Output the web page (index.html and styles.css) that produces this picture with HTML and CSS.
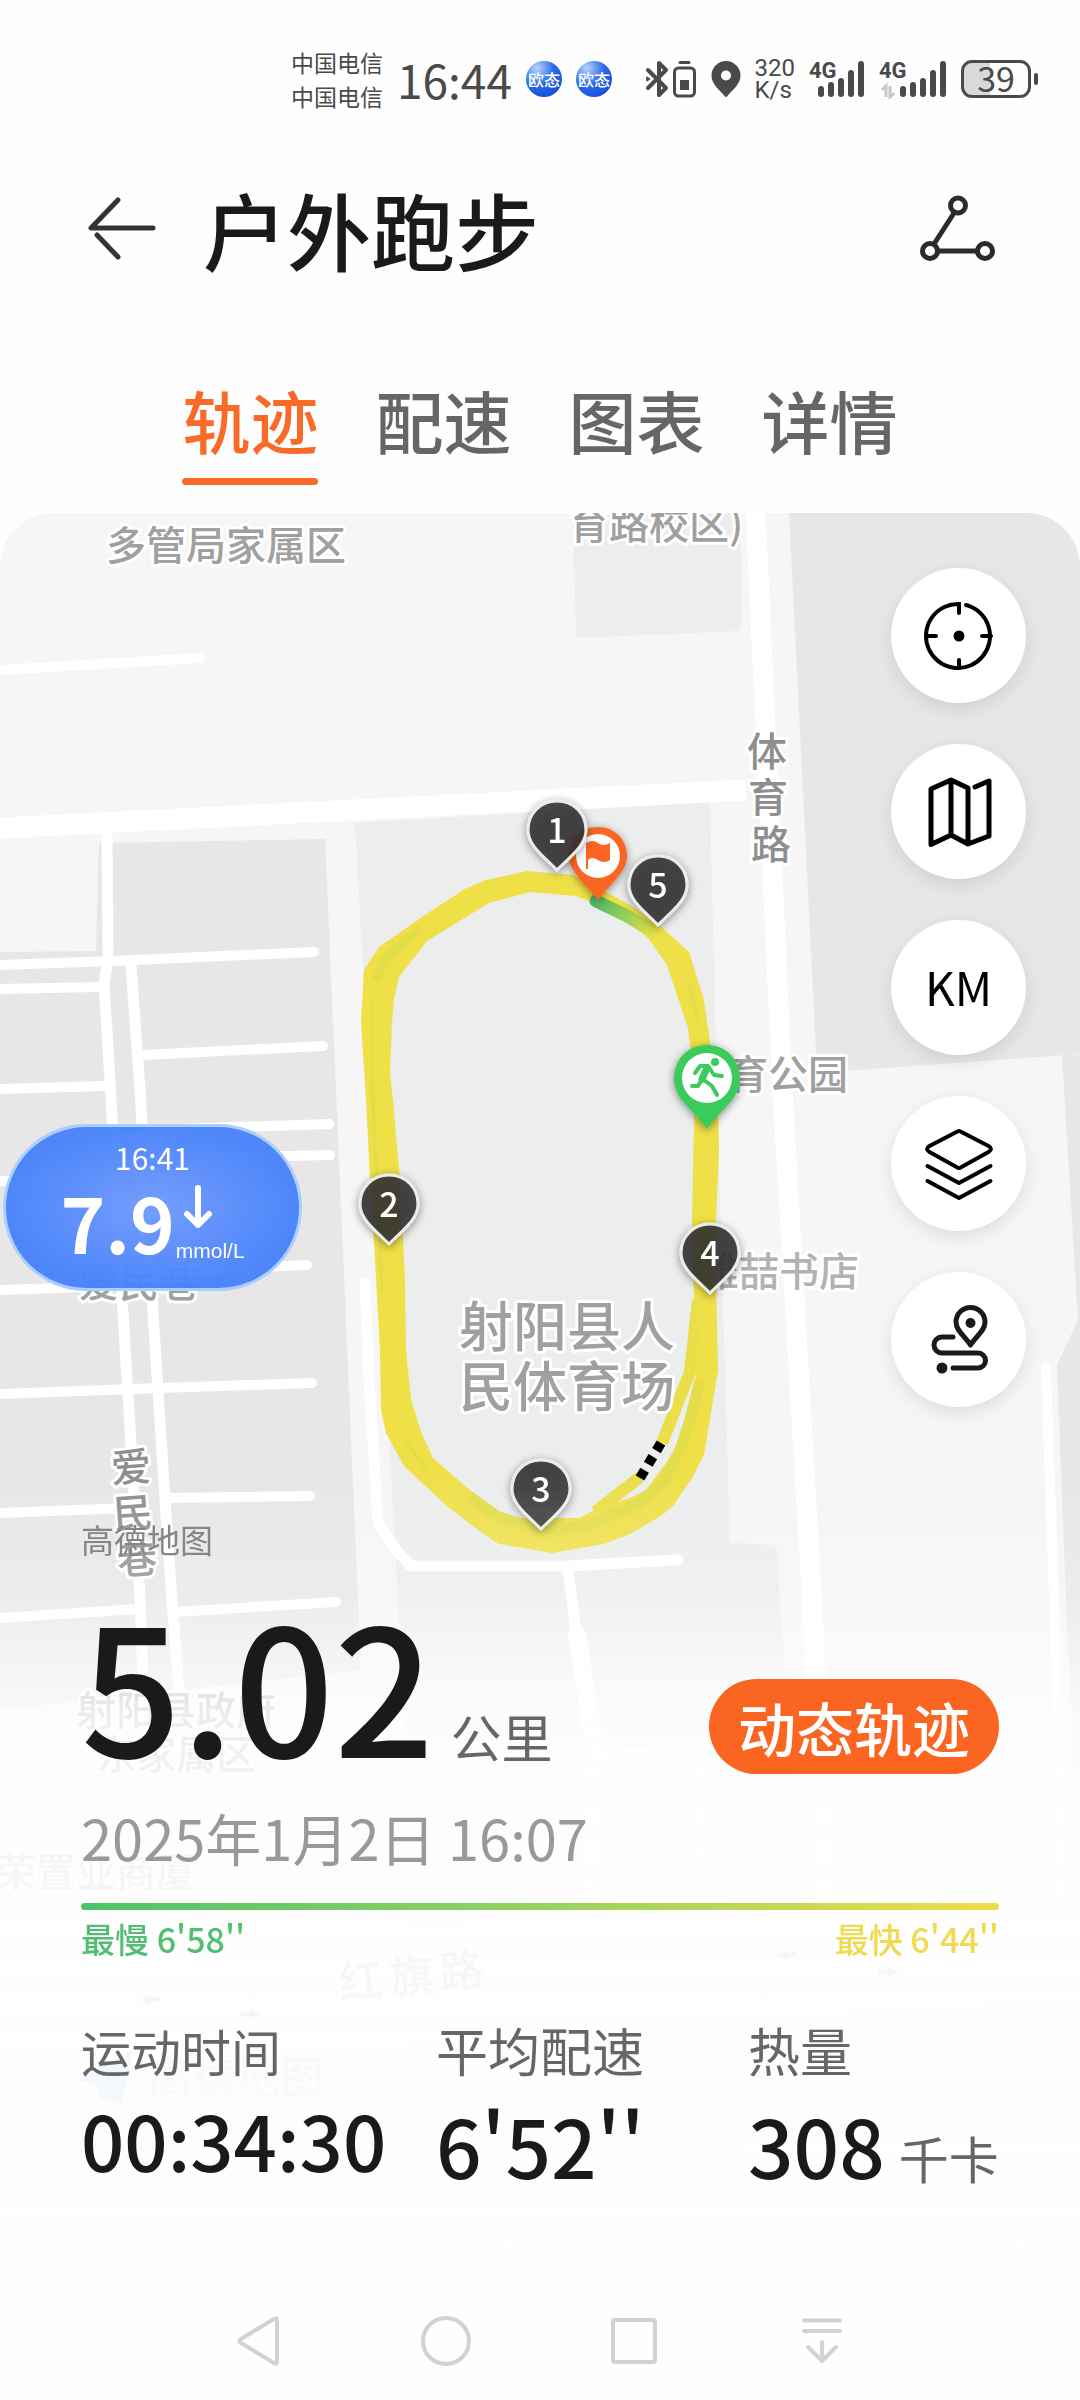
FILE: index.html
```html
<!DOCTYPE html>
<html lang="zh-CN">
<head>
<meta charset="utf-8">
<meta name="viewport" content="width=device-width, initial-scale=1">
<title>户外跑步</title>
<link rel="stylesheet" href="styles.css">
</head>
<body>
<div class="status">
  <div class="status-group">
    <div class="carrier"><span>中国电信</span><span>中国电信</span></div>
    <span class="clock">16:44</span>
    <span class="app-dot">欧态</span>
    <span class="app-dot">欧态</span>
  </div>
  <div class="status-group status-group--right">
    <svg class="ico" width="52" height="40" viewBox="647 59 52 40" fill="none" stroke="#4a4a4a" stroke-width="4" stroke-linecap="round" stroke-linejoin="round">
      <path d="M650 70L668 88L661 95V63L668 70L650 88"/>
      <path d="M649 77l3 2l-3 2z" stroke-width="1" fill="#4a4a4a"/>
      <rect x="676.500" y="68" width="20" height="28" rx="4" stroke-width="3"/>
      <path d="M682 62.500h9" stroke-width="3"/>
      <rect x="682" y="80" width="9" height="10" fill="#4a4a4a" stroke="none"/>
    </svg>
    <svg class="ico" width="30" height="38" viewBox="0 0 30 38"><path fill="#4a4a4a" fill-rule="evenodd" d="M15 1a14.500 14.500 0 0 1 14.500 14.500C29.500 25 20 31 16.500 36q-1.500 2-3 0C10 31 .5 25 .5 15.500A14.500 14.500 0 0 1 15 1zm0 9.500a5 5 0 1 0 0 10a5 5 0 0 0 0-10z"/></svg>
    <span class="speed"><span>320</span><span>K/s</span></span>
    <svg class="ico" width="56" height="40" viewBox="812 59 56 40" fill="#4a4a4a">
      <text class="net" x="812" y="78">4G</text>
      <rect x="821" y="86" width="6" height="11" rx="3"/><rect x="831" y="82" width="6" height="15" rx="3"/><rect x="841" y="78" width="6" height="19" rx="3"/><rect x="851" y="70" width="6" height="27" rx="3"/><rect x="861" y="61" width="6" height="36" rx="3"/>
    </svg>
    <svg class="ico" width="68" height="40" viewBox="880 59 68 40" fill="#4a4a4a">
      <text class="net" x="880" y="78">4G</text>
      <path d="M883 90l4-4v11M891 86v11l4-4" fill="none" stroke="#c8c8c8" stroke-width="3"/>
      <rect x="901" y="86" width="6" height="11" rx="3"/><rect x="911" y="82" width="6" height="15" rx="3"/><rect x="921" y="78" width="6" height="19" rx="3"/><rect x="931" y="70" width="6" height="27" rx="3"/><rect x="941" y="61" width="6" height="36" rx="3"/>
    </svg>
    <span class="battery">39</span>
  </div>
</div>

<header class="bar">
  <button class="icon-btn" type="button" aria-label="返回">
    <svg width="70" height="66" viewBox="87 197 70 66" fill="none" stroke="#333" stroke-width="5" stroke-linecap="round" stroke-linejoin="round"><path d="M118 201L91 229H153M97 236L118 258"/></svg>
  </button>
  <h1>户外跑步</h1>
  <button class="icon-btn" type="button" aria-label="分享">
    <svg width="76" height="68" viewBox="920 195 76 68" fill="none" stroke="#2b2b2b" stroke-width="5"><circle cx="958" cy="205.500" r="7.500"/><circle cx="930" cy="251" r="7.500"/><circle cx="985" cy="251" r="7.500"/><path d="M954 213L934 244M938 251h39"/></svg>
  </button>
</header>

<nav class="tabs">
  <button type="button" class="tab tab--on" aria-current="page">轨迹</button>
  <button type="button" class="tab">配速</button>
  <button type="button" class="tab">图表</button>
  <button type="button" class="tab">详情</button>
</nav>

<main class="panel">
  <svg class="map" viewBox="0 513 1080 1769" preserveAspectRatio="xMidYMin slice" aria-hidden="true">
    <defs>
      <linearGradient id="finish" gradientUnits="userSpaceOnUse" x1="594" y1="902" x2="655" y2="934"><stop offset="0" stop-color="#4cb866"/><stop offset=".5" stop-color="#98cf55"/><stop offset="1" stop-color="#e9df46"/></linearGradient>
      <filter id="drop" x="-40%" y="-40%" width="180%" height="180%"><feDropShadow dx="0" dy="2" stdDeviation="4" flood-opacity=".45"/></filter>
      <path id="pin" d="M0-69C17-69 29-56 29-40C29-25 15-15 0 0C-15-15-29-25-29-40C-29-56-17-69 0-69z"/>
    </defs>
    <rect y="513" width="1080" height="1769" fill="#f7f5f6"/>
    <g fill="#e8e6e7">
      <path d="M789 513H1080V1054L817 1073z"/>
      <path d="M1062 1055L1078 1320L1057 1365L1066 1600L1080 1900V1055z"/>
      <path d="M0 952L96 951L99 843L325 839L336 1090L361 1670L0 1710z"/>
    </g>
    <g fill="#ebeeec">
      <path d="M573 513L576 638L739 631L742 615L740 513z"/>
      <path d="M355 823L710 802L716 1050L720 1200L730 1543L776 1545L784 1660L802 1890L415 1925L398 1600z"/>
    </g>
    <path d="M0 2075L1080 2000V2140L0 2200z" fill="#e2eafc"/>
    <path d="M0 2200L1080 2120V2150L0 2230z" fill="#e9f5e6"/>
    <g fill="none" stroke="#fff" stroke-linecap="round" stroke-linejoin="round">
      <path stroke-width="21" stroke-linecap="butt" d="M0 828L746 790"/>
      <path stroke-width="20" d="M755 500L783 1100L812 1600L827 1900"/>
      <path stroke-width="10" d="M0 670L200 658M0 965L113 961L314 952M0 989L100 987M143 1055L323 1046M0 1089L104 1086M141 1130L329 1124M144 1159L330 1155M0 1181L115 1178M150 1272L307 1265M0 1290L118 1286M0 1394L160 1388L312 1383M0 1513L128 1508M168 1498L310 1496M0 1618L138 1609M175 1612L336 1602M1046 1368L1054 1600L1062 1900"/>
      <path stroke-width="11" d="M107 835L108 960L104 984L110 1080L123 1313L131 1445L140 1600L143 1680M131 965L140 1090L153 1313L165 1500L172 1600L179 1690M365 1283L369 1380L378 1523L396 1550L411 1566H568L678 1560M568 1570L576 1630"/>
      <path stroke-width="18" d="M577 1635L594 1740L590 1900"/>
      <path stroke-width="10" d="M600 1755L690 1750L701 1762L702 1860M0 1798L160 1790"/>
      <path stroke-width="44" d="M0 2045L500 2000L1080 1945"/>
    </g>

    <g class="lbl">
      <text x="106" y="560">多管局家属区</text>
      <text x="569" y="539">育路校区)</text>
      <text class="dark" x="747 748 751" y="766 812 859">体育路</text>
      <text x="728" y="1089">育公园</text>
      <text class="pale" x="699" y="1286">雅喆书店</text>
      <text x="79" y="1297">爱民巷</text>
      <text class="dark" x="112 114 118" y="1483 1529 1575" rotate="-4">爱民巷</text>
      <text x="76" y="1725">射阳县政府</text>
      <text x="96" y="1769">东家属区</text>
      <text x="-4" y="1887">荣置业商厦</text>
      <text class="main-road" x="340 391 441" y="1999 1994 1989" rotate="-5">红旗路</text>
    </g>
    <g fill="#999"><path d="M140 2000l10-5v3l10-1v4l-10 1v3zM260 2014l-10-5v3l-10 1v4l10-1v3zM777 1955l10-5v3l10-1v4l-10 1v3zM898 1972l-10-5v3l-10 1v4l10-1v3z"/></g>
    <path d="M78 2080L132 2050L122 2104L100 2098L98 2086z" fill="#4aa0f5"/>
    <text class="watermark" x="148" y="2094">高德地图</text>

    <path fill="#efe048" fill-rule="evenodd" d="M527 871L486 880L465 889L422 917L379 947L364 970L361 1022L366 1100L370 1180L375 1260L380 1350L381 1410L386 1433L404 1466L448 1507L482 1533L499 1544L552 1553L604 1544L630 1534L661 1516L673 1506L692 1478L704 1455L718 1370L716 1280L716 1220L719 1150L718 1100L710 1042L704 1000L689 952L659 925L630 905L574 875zM530 892L576 896L591 902L628 922L648 938L667 965L688 1028L693 1070L694 1120L692 1220L694 1297L696 1380L690 1410L684 1435L667 1462L646 1490L630 1498L600 1507L580 1518H520L496 1510L465 1486L433 1458L422 1434L411 1400L406 1350L405 1280L400 1180L393 1100L390 1072L392 1022L394 1000L399 977L427 941L489 903z"/>
    <g fill="none" stroke="#e3dd4a" stroke-linejoin="round">
      <path stroke-width="11" d="M470 1497L498 1517L525 1525L560 1530L590 1525L640 1502L662 1484L680 1450L690 1420L700 1380"/>
      <path stroke-width="9" d="M376 980L384 960L420 928"/>
      <path stroke-width="3" d="M372 1000L372 1080L382 1290M405 1440L430 1475M688 980L698 1020"/>
      <path stroke-width="12" stroke="#eadf48" d="M595 1512L640 1477M662 1443L690 1372L698 1300"/>
    </g>
    <path d="M640 1478L661 1443" stroke="#000" stroke-width="10" stroke-dasharray="9 7" fill="none"/>
    <path d="M596 901L627 916L652 931" stroke="url(#finish)" stroke-width="13" stroke-linecap="round" fill="none"/>

    <g class="stadium lbl"><text x="459" y="1347">射阳县人</text><text x="459" y="1407">民体育场</text></g>

    <g transform="translate(598 900)">
      <g filter="url(#drop)"><path fill="#fb6522" d="M0-73C17-73 29-60 29-44C29-28 12-16 0 0C-12-16-29-28-29-44C-29-60-17-73 0-73z"/></g>
      <circle cy="-44" r="22" fill="#fff"/>
      <path d="M-12-57q7-4 12 0t12 0v17q-6 4-12 0t-10 0v9h-2z" fill="#fb6522"/>
    </g>
    <g class="pins" fill="#303030" fill-opacity=".84" stroke="#ececec" stroke-width="3" filter="url(#drop)">
      <use href="#pin" x="557" y="870"/><use href="#pin" x="658" y="925"/><use href="#pin" x="389" y="1244"/><use href="#pin" x="710" y="1293"/><use href="#pin" x="541" y="1529"/>
    </g>
    <g class="pin-num"><text x="557" y="843">1</text><text x="658" y="898">5</text><text x="389" y="1217">2</text><text x="710" y="1266">4</text><text x="541" y="1502">3</text></g>
    <g transform="translate(707 1129)">
      <g filter="url(#drop)"><path fill="#3bcb5a" d="M0-84C20-84 33-69 33-50C33-30 14-20 0 0C-14-20-33-30-33-50C-33-69-20-84 0-84z"/></g>
      <circle cy="-51" r="25" fill="#fff"/>
      <g fill="none" stroke="#3bcb5a" stroke-width="4" stroke-linecap="round" stroke-linejoin="round"><path d="M-12-56L-7-63H1L7-54L15-53"/><path d="M0-61L-5-50" stroke-width="7"/><path d="M-6-48L-9-43H-15M-3-49L5-43L10-34"/></g>
      <circle cx="8" cy="-67" r="4" fill="#3bcb5a"/>
    </g>
  </svg>
  <div class="fade"></div>

  <div class="content">
    <div class="tools">
      <button type="button" class="tool" aria-label="定位"><svg width="72" height="72" viewBox="-36 -36 72 72" fill="none" stroke="#000" stroke-width="4" stroke-linecap="round"><path d="M0-23V-32A32 32 0 1 0 7-31"/><path d="M0 32V24M-32 0h9M32 0h-9"/><circle r="5.500" fill="#000" stroke="none"/></svg></button>
      <button type="button" class="tool" aria-label="地图类型"><svg width="72" height="76" viewBox="922 774 72 76" fill="none" stroke="#000" stroke-width="5" stroke-linecap="round" stroke-linejoin="round"><path d="M930 844.500V789L950 780L967 788V844L950 835zM950 780v55M967 844L988 836V781L974 787"/></svg></button>
      <button type="button" class="tool tool--km">KM</button>
      <button type="button" class="tool" aria-label="图层"><svg width="72" height="76" viewBox="922.500 1125 72 76" fill="none" stroke="#000" stroke-width="4" stroke-linecap="round" stroke-linejoin="round"><path d="M961 1131L988 1145Q993 1148 988 1151L961 1166Q958.500 1168 956 1166L929 1151Q924 1148 929 1145L956 1131Q958.500 1129 961 1131zM927 1165L958.500 1182L990 1165M927 1180L958.500 1197L990 1180"/></svg></button>
      <button type="button" class="tool" aria-label="路线"><svg width="64" height="76" viewBox="926 1302 64 76" fill="none" stroke="#1a1a1a" stroke-width="5" stroke-linecap="round" stroke-linejoin="round"><path d="M969.500 1345C964 1336 955 1331 955 1322A14.500 14.500 0 0 1 984 1322C984 1331 975 1336 969.500 1345z"/><circle cx="969.500" cy="1323" r="5" fill="#1a1a1a" stroke="none"/><path d="M952 1337H941A8 8 0 0 0 941 1353H977A7.500 7.500 0 0 1 977 1368H952"/><circle cx="941" cy="1368" r="5.500" fill="#1a1a1a" stroke="none"/></svg></button>
    </div>
    <p class="credit">高德地图</p>
    <div class="distance">
      <p class="km"><strong>5.02</strong><span>公里</span></p>
      <button type="button" class="replay">动态轨迹</button>
    </div>
    <p class="date">2025年1月2日 16:07</p>
    <div class="pace-bar"></div>
    <div class="pace-ends"><span class="slow">最慢 6'58''</span><span class="fast">最快 6'44''</span></div>
    <dl class="stats">
      <div class="stat stat--compact"><dt>运动时间</dt><dd>00:34:30</dd></div>
      <div class="stat"><dt>平均配速</dt><dd>6'52''</dd></div>
      <div class="stat"><dt>热量</dt><dd>308<small>千卡</small></dd></div>
    </dl>
  </div>

  <aside class="glucose">
    <span class="glucose-time">16:41</span>
    <div class="glucose-row">
      <strong>7.9</strong>
      <div class="glucose-side">
        <svg width="32" height="46" viewBox="0 0 32 46" fill="none" stroke="#fff" stroke-width="6" stroke-linecap="round" stroke-linejoin="round"><path d="M16 4V41M5 30L16 41L27 30"/></svg>
        <span>mmol/L</span>
      </div>
    </div>
  </aside>
</main>

<nav class="sysnav">
  <button type="button" aria-label="返回"><svg width="54" height="54" viewBox="228 2314 54 54"><path d="M274 2320V2362Q274 2365 271 2363L238 2343Q235 2341 238 2339L271 2319Q274 2317 274 2320z"/></svg></button>
  <button type="button" aria-label="主页"><svg width="54" height="54" viewBox="417 2314 54 54"><circle cx="444" cy="2341" r="23"/></svg></button>
  <button type="button" aria-label="最近任务"><svg width="54" height="54" viewBox="605 2314 54 54"><rect x="611" y="2320" width="42" height="42" rx="2"/></svg></button>
  <button type="button" aria-label="通知栏"><svg width="54" height="54" viewBox="794 2314 54 54"><path d="M803 2320.500h36M803 2331h36M821 2342v18M807 2347l14 14l14-14"/></svg></button>
</nav>
</body>
</html>
```
FILE: styles.css
```css
* { box-sizing: border-box; }

body {
  margin: 0;
  background: #fefefe;
  color: #1a1a1a;
  font-family: "Noto Sans CJK SC", "Noto Sans", sans-serif;
}

h1, p, dl, dd { margin: 0; }

button {
  margin: 0;
  padding: 0;
  border: 0;
  background: none;
  color: inherit;
  font: inherit;
}

svg { display: block; }

/* status bar */
.status {
  display: flex;
  justify-content: space-between;
  align-items: center;
  height: 158px;
  padding: 0 42px 0 291px;
  color: #4a4a4a;
}
.status-group { display: flex; align-items: center; gap: 14px; }
.carrier { display: flex; flex-direction: column; font-size: 23px; line-height: 34px; }
.clock { font-size: 46px; line-height: 50px; }
.app-dot {
  width: 36px;
  height: 36px;
  border-radius: 50%;
  background: radial-gradient(circle at 30% 20%, #b9d2fb 0, #2a6ae8 45%, #1750d8 80%, #6d9bf0 100%);
  color: #fff;
  font-size: 16px;
  font-weight: 500;
  line-height: 36px;
  text-align: center;
}
.speed { display: flex; flex-direction: column; font: 24px/22px Roboto, sans-serif; }
.net { font: 700 22px Roboto, sans-serif; }
.battery {
  position: relative;
  width: 70px;
  height: 38px;
  margin-right: 7px;
  border: 3px solid #4a4a4a;
  border-radius: 11px;
  background: linear-gradient(90deg, #d9d9d9 40%, transparent 40%);
  font-size: 34px;
  line-height: 30px;
  text-align: center;
}
.battery::after {
  content: "";
  position: absolute;
  right: -10px;
  top: 10px;
  width: 4px;
  height: 12px;
  border-radius: 2px;
  background: #4a4a4a;
}

/* title */
.bar {
  display: flex;
  align-items: center;
  height: 142px;
  padding: 0 84px 0 87px;
}
.bar h1 {
  flex: 1;
  margin-left: 46px;
  font-size: 84px;
  font-weight: 500;
  line-height: 100px;
}

/* tabs */
.tabs {
  display: flex;
  justify-content: center;
  gap: 57px;
  padding: 70px 0 28px;
}
.tab {
  position: relative;
  padding-bottom: 15px;
  color: #666;
  font-size: 68px;
  font-weight: 500;
  line-height: 100px;
}
.tab--on { color: #f96a27; }
.tab--on::after {
  content: "";
  position: absolute;
  left: 0;
  right: 0;
  bottom: 0;
  height: 7px;
  border-radius: 4px;
  background: #f96a27;
}

/* map panel */
.panel {
  position: relative;
  overflow: hidden;
  border-radius: 54px 54px 0 0;
}
.map, .fade {
  position: absolute;
  inset: 0;
  width: 100%;
  height: 100%;
}
.fade {
  background: linear-gradient(to bottom,
    rgba(254, 254, 254, 0) 54%,
    rgba(254, 254, 254, .22) 61%,
    rgba(254, 254, 254, .5) 64%,
    rgba(254, 254, 254, .82) 68%,
    rgba(254, 254, 254, .9) 73%,
    rgba(254, 254, 254, .93) 88%,
    #fefefe 99%);
}
.lbl {
  fill: #a0a0a0;
  stroke: #fff;
  stroke-width: 6px;
  stroke-linejoin: round;
  paint-order: stroke;
  font-size: 40px;
  font-weight: 500;
}
.lbl .dark { fill: #8e8e8e; }
.lbl .pale { fill: #b2b2b2; }
.lbl .main-road { font-size: 44px; }
.stadium { font-size: 54px; }
.watermark { fill: #bbb; font-size: 44px; font-weight: 500; }
.pin-num {
  fill: #fff;
  font-size: 34px;
  font-weight: 500;
  text-anchor: middle;
}

.content { position: relative; padding: 55px 81px 88px; }
.tools {
  display: flex;
  flex-direction: column;
  align-items: flex-end;
  gap: 41px;
  margin-right: -27px;
}
.tool {
  display: grid;
  place-items: center;
  width: 135px;
  height: 135px;
  border-radius: 50%;
  background: #fff;
  box-shadow: 0 6px 18px rgba(0, 0, 0, .1);
  color: #000;
}
.tool--km { padding-bottom: 4px; font-size: 46px; line-height: 60px; }
.credit {
  margin-top: 112px;
  color: #858585;
  font-size: 33px;
  line-height: 40px;
}

.distance {
  display: flex;
  justify-content: space-between;
  align-items: flex-end;
  margin-top: 31px;
}
.km { display: flex; align-items: baseline; gap: 16px; }
.km strong { font-size: 176px; font-weight: 500; line-height: 184px; }
.km span { color: #666; font-size: 51px; line-height: 60px; }
.replay {
  height: 95px;
  padding: 0 29px;
  border-radius: 48px;
  background: #fb6522;
  color: #fff;
  font-size: 58px;
  font-weight: 500;
  line-height: 90px;
}
.date {
  margin-top: 31px;
  color: #999;
  font-size: 56px;
  line-height: 64px;
}
.pace-bar {
  height: 7px;
  margin-top: 34px;
  border-radius: 4px;
  background: linear-gradient(90deg, #4bc46c, #9ad35e 52%, #f0dc4c);
}
.pace-ends {
  display: flex;
  justify-content: space-between;
  margin-top: 9px;
  font-size: 34px;
  font-weight: 500;
  line-height: 40px;
}
.slow { color: #52be72; }
.fast { color: #eedb50; }

.stats {
  display: grid;
  grid-template-columns: 355fr 312fr 251fr;
  margin-top: 61px;
}
.stat dt { color: #666; font-size: 52px; line-height: 60px; }
.stat dd {
  height: 100px;
  margin-top: 14px;
  font-size: 80px;
  font-weight: 500;
  line-height: 100px;
  white-space: nowrap;
}
.stat--compact dt { font-size: 50px; }
.stat--compact dd { font-size: 76px; line-height: 90px; }
.stat small {
  margin-left: 14px;
  color: #666;
  font-size: 50px;
  font-weight: 400;
  line-height: 1;
}

/* floating glucose widget */
.glucose {
  position: absolute;
  left: 3px;
  top: 611px;
  display: flex;
  flex-direction: column;
  align-items: center;
  width: 299px;
  height: 167px;
  padding-top: 12px;
  border: 3px solid #a9cffd;
  border-radius: 84px;
  background: radial-gradient(ellipse, rgba(112, 155, 251, .97) 0, rgba(72, 130, 251, .96) 70%);
  color: #fff;
}
.glucose-time { font-size: 30px; line-height: 36px; }
.glucose-row { display: flex; align-items: flex-end; gap: 1px; }
.glucose-row strong { font-size: 76px; font-weight: 700; line-height: 92px; }
.glucose-side { padding-bottom: 3px; font: 21px/26px "Liberation Sans", sans-serif; }
.glucose-side svg { margin: 0 0 8px 6px; }

/* system navigation */
.sysnav { display: flex; justify-content: center; height: 118px; }
.sysnav button { display: grid; place-items: center; width: 188px; }
.sysnav svg {
  fill: none;
  stroke: #d2d2d2;
  stroke-width: 4;
  stroke-linecap: round;
  stroke-linejoin: round;
}
```
